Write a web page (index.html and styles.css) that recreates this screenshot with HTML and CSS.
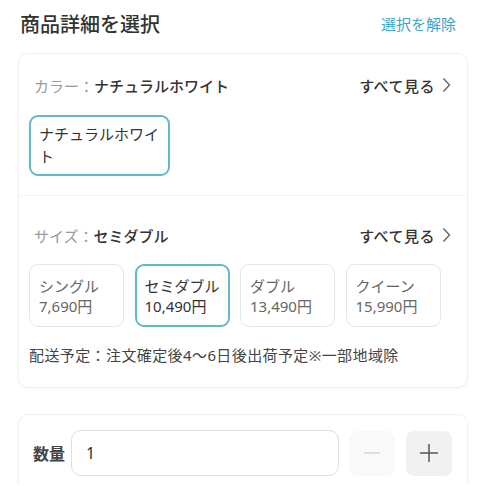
FILE: index.html
```html
<!DOCTYPE html>
<html lang="ja">
<head>
  <meta charset="UTF-8" />
  <meta name="viewport" content="width=device-width, initial-scale=1.0">
  <title>商品詳細を選択</title>
  <link rel="stylesheet" href="styles.css">
</head>
<body>
  <div class="header">
    <h1>商品詳細を選択</h1>
    <a href="#" class="clear">選択を解除</a>
  </div>

  <div class="card">
    <div class="section color">
      <div class="row">
        <div class="label">カラー：<strong>ナチュラルホワイト</strong></div>
        <a href="#" class="more">すべて見る
          <svg width="11" height="16" viewBox="0 0 11 16"><path d="M2.5 1.5 L8.5 8 L2.5 14.5" fill="none" stroke="#666" stroke-width="1.4"/></svg>
        </a>
      </div>
      <div class="color-chip">ナチュラルホワイト</div>
    </div>

    <div class="section size">
      <div class="row">
        <div class="label">サイズ：<strong>セミダブル</strong></div>
        <a href="#" class="more">すべて見る
          <svg width="11" height="16" viewBox="0 0 11 16"><path d="M2.5 1.5 L8.5 8 L2.5 14.5" fill="none" stroke="#666" stroke-width="1.4"/></svg>
        </a>
      </div>
      <div class="sizes">
        <div class="size-chip">シングル<br>7,690円</div>
        <div class="size-chip selected">セミダブル<br>10,490円</div>
        <div class="size-chip">ダブル<br>13,490円</div>
        <div class="size-chip">クイーン<br>15,990円</div>
      </div>
      <p class="delivery">配送予定：注文確定後4〜6日後出荷予定※一部地域除</p>
    </div>
  </div>

  <div class="card qty-card">
    <div class="qty">
      <span class="qty-label">数量</span>
      <input type="text" value="1" />
      <button class="minus"><svg width="18" height="18" viewBox="0 0 18 18"><path d="M1 9 H17" stroke="#d4d4d4" stroke-width="1.4"/></svg></button>
      <button class="plus"><svg width="20" height="20" viewBox="0 0 20 20"><path d="M1 10 H19 M10 1 V19" stroke="#555" stroke-width="1.5"/></svg></button>
    </div>
  </div>
</body>
</html>
```

FILE: styles.css
```css
body {
  margin: 0;
  padding: 0 18px;
  background: #fff;
  color: #333;
  font-family: "Noto Sans", "Noto Sans CJK JP", sans-serif;
}

.header {
  display: flex;
  justify-content: space-between;
  align-items: center;
  height: 46px;
  padding: 0 12px 0 2px;
}

h1 {
  margin: 0;
  font-size: 20px;
  font-weight: 500;
  color: #333;
}

.clear {
  color: #3aa7cb;
  font-size: 15px;
  text-decoration: none;
}

.card {
  margin-top: 7px;
  border: 1px solid #f0f0f0;
  border-radius: 10px;
  box-shadow: 0 1px 3px rgba(0, 0, 0, 0.03);
}

.section {
  padding: 0 10px;
}

.color {
  padding-top: 16px;
  padding-bottom: 19px;
  border-bottom: 1px solid #f5f5f5;
}

.size {
  padding-top: 24px;
  padding-bottom: 22px;
}

.row {
  display: flex;
  justify-content: space-between;
  align-items: center;
  height: 30px;
  padding: 0 5px;
  font-size: 15px;
}

.label {
  color: #999;
}

.label strong {
  color: #333;
  font-weight: 500;
}

.more {
  display: flex;
  align-items: center;
  gap: 6px;
  color: #333;
  font-weight: 500;
  letter-spacing: 0.5px;
  text-decoration: none;
}

.color-chip {
  margin-top: 15px;
  box-sizing: border-box;
  width: 141px;
  height: 61px;
  padding: 6px 8px;
  border: 2px solid #62b9c8;
  border-radius: 9px;
  font-size: 15px;
  line-height: 22px;
  color: #333;
}

.sizes {
  display: grid;
  grid-template-columns: repeat(4, 95px);
  gap: 10.5px;
  margin-top: 14px;
}

.size-chip {
  box-sizing: border-box;
  height: 63px;
  padding: 11px 9px 0;
  border: 1px solid #e6e6e6;
  border-radius: 9px;
  font-size: 15px;
  line-height: 20px;
  color: #666;
}

.size-chip.selected {
  border: 2px solid #62b9c8;
  padding: 10px 8px 0;
  color: #333;
}

.delivery {
  margin: 18px 0 0;
  font-size: 15px;
  line-height: 20px;
  letter-spacing: 0.4px;
  color: #444;
}

.qty-card {
  margin-top: 26px;
  height: 68px;
  border-bottom: none;
  border-radius: 10px 10px 0 0;
}

.qty {
  display: flex;
  align-items: center;
  padding: 15px 14px 0;
}

.qty-label {
  font-size: 16px;
  font-weight: 700;
  color: #444;
  width: 32px;
  margin-right: 6px;
}

input {
  box-sizing: border-box;
  width: 268px;
  height: 46px;
  padding: 0 14px;
  border: 1px solid #dedede;
  border-radius: 10px;
  font-family: inherit;
  font-size: 16px;
  color: #333;
  outline: none;
}

button {
  display: flex;
  align-items: center;
  justify-content: center;
  width: 46px;
  height: 45px;
  border: none;
  border-radius: 8px;
  padding: 0;
}

.minus {
  margin-left: 10px;
  background: #f9f9f9;
}

.plus {
  margin-left: 11px;
  background: #f1f1f1;
}
```
